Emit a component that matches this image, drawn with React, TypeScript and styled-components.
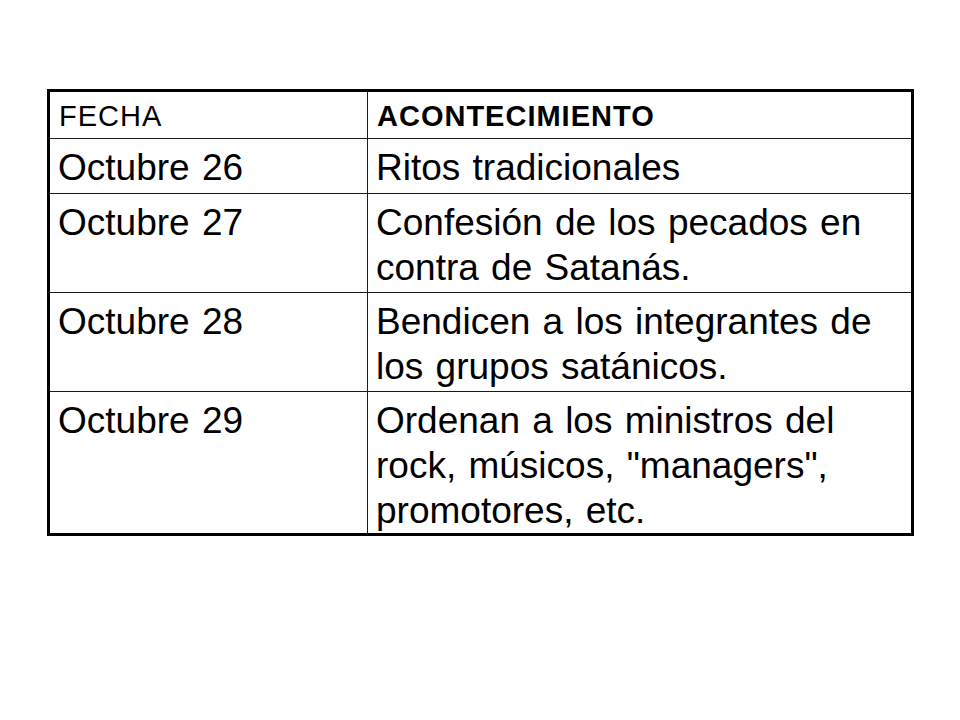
import styled, { createGlobalStyle } from "styled-components";

const GlobalStyle = createGlobalStyle`
  html, body {
    margin: 0;
    padding: 0;
    background: #fff;
  }
  body {
    font-family: "Liberation Sans", Arial, sans-serif;
    color: #000;
  }
`;

const Page = styled.div`
  width: 960px;
  height: 720px;
  padding: 89px 0 0 47px;
  box-sizing: border-box;
`;

const Table = styled.div`
  display: grid;
  grid-template-columns: 318px 543px;
  grid-template-rows: 47px 55px 99px 99px 141px;
  width: 867px;
  border: 3px solid #000;
  box-sizing: border-box;
`;

const Cell = styled.div<{ $last?: boolean; $first?: boolean; $head?: boolean; $bold?: boolean }>`
  box-sizing: border-box;
  border-bottom: ${(p) => (p.$last ? "none" : "1px solid #1a1a1a")};
  border-right: ${(p) => (p.$first ? "1px solid #1a1a1a" : "none")};
  padding: ${(p) => (p.$head ? "7px 8px 0 9px" : "6px 8px 0 8px")};
  font-size: ${(p) => (p.$head ? "29px" : "37px")};
  line-height: ${(p) => (p.$head ? "34px" : "45px")};
  letter-spacing: ${(p) => (p.$head ? "1px" : "0")};
  font-weight: ${(p) => (p.$bold ? 700 : 400)};
  word-spacing: ${(p) => (p.$head ? "0" : "2px")};
`;

const rows = [
  { fecha: "Octubre 26", evento: "Ritos tradicionales" },
  { fecha: "Octubre 27", evento: "Confesión de los pecados en contra de Satanás." },
  { fecha: "Octubre 28", evento: "Bendicen a los integrantes de los grupos satánicos." },
  {
    fecha: "Octubre 29",
    evento: 'Ordenan a los ministros del rock, músicos, "managers", promotores, etc.',
  },
];

export default function App() {
  return (
    <>
      <GlobalStyle />
      <Page>
        <Table>
          <Cell $head $first>FECHA</Cell>
          <Cell $head $bold>ACONTECIMIENTO</Cell>
          {rows.map((r, i) => {
            const last = i === rows.length - 1;
            return [
              <Cell key={r.fecha + "a"} $first $last={last}>
                {r.fecha}
              </Cell>,
              <Cell key={r.fecha + "b"} $last={last}>
                {r.evento}
              </Cell>,
            ];
          })}
        </Table>
      </Page>
    </>
  );
}
